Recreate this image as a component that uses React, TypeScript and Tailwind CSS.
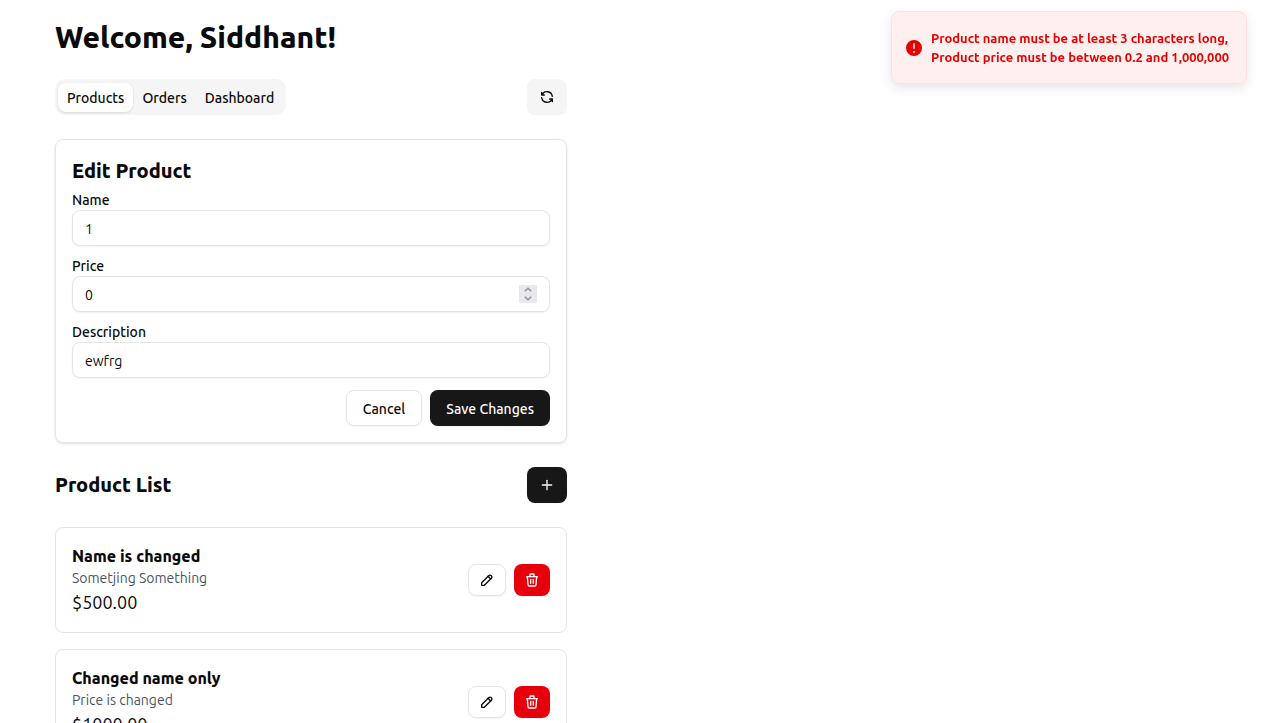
import { useState } from "react";
import type { ComponentProps, ReactNode } from "react";
import { TbPencil, TbPlus, TbRefresh, TbTrash } from "react-icons/tb";

const tabs = ["Products", "Orders", "Dashboard"];

const products = [
  { id: 1, name: "Name is changed", description: "Sometjing Something", price: 500 },
  { id: 2, name: "Changed name only", description: "Price is changed", price: 1000 },
];

function Field({ id, label, children, ...props }: ComponentProps<"input"> & { label: string; children?: ReactNode }) {
  return (
    <div className="flex flex-col">
      <label htmlFor={id} className="mb-0.5 text-sm leading-4 font-medium">
        {label}
      </label>
      <div className="relative">
        <input
          id={id}
          className="block h-9 w-full appearance-none rounded-lg border border-neutral-200 bg-white px-3 pt-1.5 pb-1 text-sm shadow-xs outline-none [&::-webkit-inner-spin-button]:appearance-none"
          {...props}
        />
        {children}
      </div>
    </div>
  );
}

function Stepper({ onStep }: { onStep: (by: number) => void }) {
  return (
    <div className="absolute inset-y-0 right-[13px] flex items-center">
      <div className="flex size-[18px] flex-col bg-[#e9e9ed] text-[#8f8f9d]">
        <button type="button" aria-label="Increase price" onClick={() => onStep(1)} className="flex h-[9px] items-center justify-center">
          <svg width="8" height="5" viewBox="0 0 8 5" fill="none" stroke="currentColor" strokeWidth="1.5">
            <path d="M0.8 4.2 4 1.2 7.2 4.2" />
          </svg>
        </button>
        <button type="button" aria-label="Decrease price" onClick={() => onStep(-1)} className="flex h-[9px] items-center justify-center">
          <svg width="8" height="5" viewBox="0 0 8 5" fill="none" stroke="currentColor" strokeWidth="1.5">
            <path d="M0.8 0.8 4 3.8 7.2 0.8" />
          </svg>
        </button>
      </div>
    </div>
  );
}

function Toast({ children }: { children: ReactNode }) {
  return (
    <div
      role="alert"
      className="fixed top-[11px] right-[17px] flex w-[356px] items-center gap-[7px] rounded-lg border border-[#ffe0e1] bg-[#fff0f0] pt-[17px] pr-4 pb-4 pl-3 text-[13px] leading-[19px] font-semibold text-[#e60000] shadow-[0_4px_12px_rgba(0,0,0,0.1)]"
    >
      <svg viewBox="0 0 20 20" fill="currentColor" className="size-5 shrink-0" aria-hidden="true">
        <path
          fillRule="evenodd"
          clipRule="evenodd"
          d="M18 10a8 8 0 11-16 0 8 8 0 0116 0zm-8-5a.75.75 0 01.75.75v4.5a.75.75 0 01-1.5 0v-4.5A.75.75 0 0110 5zm0 10a1 1 0 100-2 1 1 0 000 2z"
        />
      </svg>
      <p>{children}</p>
    </div>
  );
}

export default function App() {
  const [tab, setTab] = useState("Products");
  const [name, setName] = useState("1");
  const [price, setPrice] = useState(0);
  const [description, setDescription] = useState("ewfrg");

  return (
    <div className="min-h-screen bg-white pt-[19px] pr-4 pb-6 pl-[55px] font-[Ubuntu,'Noto_Sans',sans-serif] text-neutral-950">
      <main className="max-w-lg">
        <h1 className="mb-6 text-3xl font-extrabold">Welcome, Siddhant!</h1>

        <div className="mb-6 flex items-center justify-between">
          <div role="tablist" className="flex h-9 items-center rounded-[10px] bg-neutral-100 p-[3px]">
            {tabs.map((t) => (
              <button
                key={t}
                type="button"
                role="tab"
                aria-selected={t === tab}
                onClick={() => setTab(t)}
                className={
                  "h-[29px] rounded-lg px-[9px] pt-0.5 text-sm font-medium " + (t === tab ? "bg-white shadow-sm" : "")
                }
              >
                {t}
              </button>
            ))}
          </div>
          <button type="button" aria-label="Refresh" className="flex h-9 w-10 items-center justify-center rounded-lg bg-neutral-100">
            <TbRefresh size={16} />
          </button>
        </div>

        <form onSubmit={(e) => e.preventDefault()} className="mb-6 rounded-lg border border-neutral-200 p-4 shadow-sm">
          <h2 className="mb-1.5 text-xl leading-[30px] font-extrabold">Edit Product</h2>
          <div className="flex flex-col gap-3">
            <Field id="name" label="Name" value={name} onChange={(e) => setName(e.target.value)} />
            <Field id="price" label="Price" type="number" value={price} onChange={(e) => setPrice(Number(e.target.value))}>
              <Stepper onStep={(by) => setPrice(price + by)} />
            </Field>
            <Field id="description" label="Description" value={description} onChange={(e) => setDescription(e.target.value)} />
            <div className="flex justify-end gap-2">
              <button type="button" className="h-9 rounded-lg border border-neutral-200 bg-white px-4 pt-0.5 text-sm font-medium shadow-xs">
                Cancel
              </button>
              <button type="submit" className="h-9 rounded-lg bg-neutral-900 px-4 pt-0.5 text-sm font-medium text-neutral-50 shadow-xs">
                Save Changes
              </button>
            </div>
          </div>
        </form>

        <div className="mb-6 flex items-center justify-between">
          <h2 className="text-xl leading-[30px] font-extrabold">Product List</h2>
          <button type="button" aria-label="Add product" className="flex h-9 w-10 items-center justify-center rounded-lg bg-neutral-900 text-neutral-50 shadow-xs">
            <TbPlus size={16} />
          </button>
        </div>

        <ul className="flex flex-col gap-4">
          {products.map((p) => (
            <li key={p.id} className="flex items-center justify-between rounded-lg border border-neutral-200 p-4">
              <div>
                <h3 className="font-extrabold">{p.name}</h3>
                <p className="text-sm text-gray-600">{p.description}</p>
                <p className="text-lg">${p.price.toFixed(2)}</p>
              </div>
              <div className="flex gap-2">
                <button type="button" aria-label={`Edit ${p.name}`} className="flex h-8 w-[38px] items-center justify-center rounded-lg border border-neutral-200 bg-white shadow-xs">
                  <TbPencil size={16} />
                </button>
                <button type="button" aria-label={`Delete ${p.name}`} className="flex h-8 w-9 items-center justify-center rounded-lg bg-[#e7000b] text-white shadow-xs">
                  <TbTrash size={16} />
                </button>
              </div>
            </li>
          ))}
        </ul>
      </main>

      <Toast>Product name must be at least 3 characters long, Product price must be between 0.2 and 1,000,000</Toast>
    </div>
  );
}
